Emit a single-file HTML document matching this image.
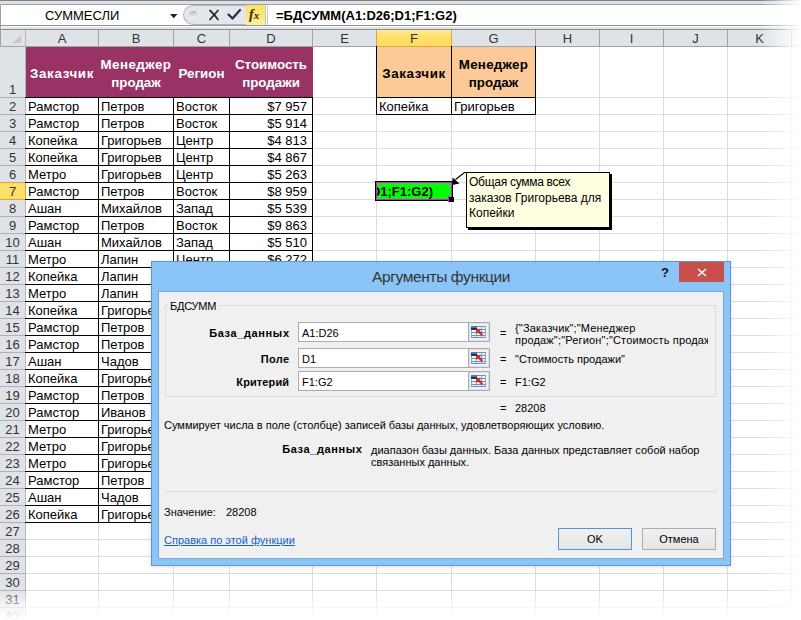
<!DOCTYPE html>
<html><head><meta charset="utf-8"><style>
*{margin:0;padding:0;box-sizing:border-box}
html,body{width:801px;height:620px;overflow:hidden;background:#fff}
body{position:relative;font-family:"Liberation Sans",sans-serif;color:#000}
.a{position:absolute}
.t{position:absolute;white-space:pre;line-height:1}
.gl{position:absolute;background:#dadcdd}
.hd{position:absolute;background:#dfe3e8}
.cell{position:absolute;white-space:pre;font-size:13px;line-height:17px;overflow:hidden}
.dt{font-family:"Liberation Sans",sans-serif;font-size:11px}
</style></head><body>

<div class="a" style="left:0;top:0;width:801px;height:1px;background:#7d8084"></div>
<div class="a" style="left:0;top:1px;width:801px;height:3px;background:#dde1e6"></div>
<div class="a" style="left:0;top:4px;width:801px;height:1px;background:#9aa1a8"></div>
<div class="a" style="left:0;top:5px;width:801px;height:20px;background:#fff"></div>
<div class="a" style="left:0;top:4px;width:1px;height:42px;background:#9aa1a8"></div>
<div class="a" style="left:0;top:25px;width:801px;height:1px;background:#8d9399"></div>
<div class="a" style="left:1px;top:26px;width:800px;height:1px;background:#fff"></div>
<div class="a" style="left:2px;top:27px;width:799px;height:2px;background:#dfe4ea"></div>
<div class="a" style="left:0;top:29px;width:801px;height:1px;background:#8a8c8e"></div>
<div class="t" style="left:45px;top:9px;font-size:13px;">СУММЕСЛИ</div>
<svg class="a" style="left:169px;top:13px" width="10" height="7" viewBox="0 0 10 7"><path d="M1 1 H8.5 L4.75 5.2 Z" fill="#222"/></svg>
<div class="a" style="left:183px;top:5px;width:70px;height:20px;background:#e3e6ea;border:1px solid #b3b8be;border-right:none;border-radius:10px 0 0 10px"></div>
<div class="a" style="left:189px;top:11px;width:8px;height:8px;border-radius:50%;background:linear-gradient(#b4b8bd,#d9dcdf 50%,#f6f7f8)"></div>
<svg class="a" style="left:208px;top:9px" width="12" height="12" viewBox="0 0 12 12"><path d="M2 1.5 Q6 5 10 10.5 M10 1.5 Q6 6 2 10.5" stroke="#262626" stroke-width="1.7" fill="none" stroke-linecap="round"/></svg>
<svg class="a" style="left:227px;top:8px" width="15" height="13" viewBox="0 0 15 13"><path d="M1.5 6.5 L5.5 10.5 L13 2" stroke="#25324a" stroke-width="2.3" fill="none" stroke-linecap="round" stroke-linejoin="round"/></svg>
<div class="a" style="left:246px;top:5px;width:20px;height:20px;background:linear-gradient(#fee36a,#fde672 55%,#fdf0a6);border-right:1px solid #c9c9c9"></div>
<div class="t" style="left:249px;top:8px;font-family:'Liberation Serif',serif;font-style:italic;font-weight:bold;font-size:14px;color:#2a2a2a">f<span style="font-size:11px;margin-left:0px">x</span></div>
<div class="a" style="left:267px;top:5px;width:1px;height:20px;background:#c7cbd0"></div>
<div class="t" style="left:276px;top:9px;font-size:13px;font-weight:bold">=БДСУММ(A1:D26;D1;F1:G2)</div>
<div class="hd" style="left:1px;top:30px;width:800px;height:16px"></div>
<div class="a" style="left:0;top:46px;width:801px;height:1px;background:#9ea3a8"></div>
<svg class="a" style="left:12px;top:34px" width="10" height="10" viewBox="0 0 10 10"><path d="M1 9 L9 9 L9 1 Z" fill="#c4c8cc"/></svg>
<div class="t" style="left:26px;top:32px;width:72px;text-align:center;font-size:13px;color:#333">A</div>
<div class="t" style="left:99px;top:32px;width:74px;text-align:center;font-size:13px;color:#333">B</div>
<div class="t" style="left:174px;top:32px;width:55px;text-align:center;font-size:13px;color:#333">C</div>
<div class="t" style="left:230px;top:32px;width:82px;text-align:center;font-size:13px;color:#333">D</div>
<div class="t" style="left:313px;top:32px;width:63px;text-align:center;font-size:13px;color:#333">E</div>
<div class="a" style="left:376px;top:30px;width:76px;height:17px;background:linear-gradient(#fee89a,#fde06a 45%,#fddd60);border:1px solid #e2a241;border-top:none"></div>
<div class="t" style="left:377px;top:32px;width:74px;text-align:center;font-size:13px;color:#333">F</div>
<div class="t" style="left:452px;top:32px;width:83px;text-align:center;font-size:13px;color:#333">G</div>
<div class="t" style="left:536px;top:32px;width:63px;text-align:center;font-size:13px;color:#333">H</div>
<div class="t" style="left:600px;top:32px;width:63px;text-align:center;font-size:13px;color:#333">I</div>
<div class="t" style="left:664px;top:32px;width:63px;text-align:center;font-size:13px;color:#333">J</div>
<div class="t" style="left:728px;top:32px;width:63px;text-align:center;font-size:13px;color:#333">K</div>
<div class="a" style="left:25px;top:30px;width:1px;height:16px;background:#9ea3a8"></div>
<div class="a" style="left:98px;top:30px;width:1px;height:16px;background:#9ea3a8"></div>
<div class="a" style="left:173px;top:30px;width:1px;height:16px;background:#9ea3a8"></div>
<div class="a" style="left:229px;top:30px;width:1px;height:16px;background:#9ea3a8"></div>
<div class="a" style="left:312px;top:30px;width:1px;height:16px;background:#9ea3a8"></div>
<div class="a" style="left:535px;top:30px;width:1px;height:16px;background:#9ea3a8"></div>
<div class="a" style="left:599px;top:30px;width:1px;height:16px;background:#9ea3a8"></div>
<div class="a" style="left:663px;top:30px;width:1px;height:16px;background:#9ea3a8"></div>
<div class="a" style="left:727px;top:30px;width:1px;height:16px;background:#9ea3a8"></div>
<div class="a" style="left:791px;top:30px;width:1px;height:16px;background:#9ea3a8"></div>
<div class="hd" style="left:0;top:47px;width:25px;height:573px"></div>
<div class="a" style="left:25px;top:30px;width:1px;height:590px;background:#b4b8bd"></div>
<div class="a" style="left:0;top:97px;width:25px;height:1px;background:#aeb2b7"></div>
<div class="t" style="left:0;top:83px;width:25px;text-align:center;font-size:13px;color:#333">1</div>
<div class="a" style="left:0;top:114px;width:25px;height:1px;background:#aeb2b7"></div>
<div class="t" style="left:0;top:100px;width:25px;text-align:center;font-size:13px;color:#333">2</div>
<div class="a" style="left:0;top:131px;width:25px;height:1px;background:#aeb2b7"></div>
<div class="t" style="left:0;top:117px;width:25px;text-align:center;font-size:13px;color:#333">3</div>
<div class="a" style="left:0;top:148px;width:25px;height:1px;background:#aeb2b7"></div>
<div class="t" style="left:0;top:134px;width:25px;text-align:center;font-size:13px;color:#333">4</div>
<div class="a" style="left:0;top:165px;width:25px;height:1px;background:#aeb2b7"></div>
<div class="t" style="left:0;top:151px;width:25px;text-align:center;font-size:13px;color:#333">5</div>
<div class="a" style="left:0;top:182px;width:25px;height:1px;background:#aeb2b7"></div>
<div class="t" style="left:0;top:168px;width:25px;text-align:center;font-size:13px;color:#333">6</div>
<div class="a" style="left:0;top:199px;width:25px;height:1px;background:#aeb2b7"></div>
<div class="a" style="left:0;top:182px;width:26px;height:18px;background:#fde06a;border:1px solid #e2a241;border-left:none"></div>
<div class="t" style="left:0;top:185px;width:25px;text-align:center;font-size:13px;color:#333">7</div>
<div class="a" style="left:0;top:216px;width:25px;height:1px;background:#aeb2b7"></div>
<div class="t" style="left:0;top:202px;width:25px;text-align:center;font-size:13px;color:#333">8</div>
<div class="a" style="left:0;top:233px;width:25px;height:1px;background:#aeb2b7"></div>
<div class="t" style="left:0;top:219px;width:25px;text-align:center;font-size:13px;color:#333">9</div>
<div class="a" style="left:0;top:250px;width:25px;height:1px;background:#aeb2b7"></div>
<div class="t" style="left:0;top:236px;width:25px;text-align:center;font-size:13px;color:#333">10</div>
<div class="a" style="left:0;top:267px;width:25px;height:1px;background:#aeb2b7"></div>
<div class="t" style="left:0;top:253px;width:25px;text-align:center;font-size:13px;color:#333">11</div>
<div class="a" style="left:0;top:284px;width:25px;height:1px;background:#aeb2b7"></div>
<div class="t" style="left:0;top:270px;width:25px;text-align:center;font-size:13px;color:#333">12</div>
<div class="a" style="left:0;top:301px;width:25px;height:1px;background:#aeb2b7"></div>
<div class="t" style="left:0;top:287px;width:25px;text-align:center;font-size:13px;color:#333">13</div>
<div class="a" style="left:0;top:318px;width:25px;height:1px;background:#aeb2b7"></div>
<div class="t" style="left:0;top:304px;width:25px;text-align:center;font-size:13px;color:#333">14</div>
<div class="a" style="left:0;top:335px;width:25px;height:1px;background:#aeb2b7"></div>
<div class="t" style="left:0;top:321px;width:25px;text-align:center;font-size:13px;color:#333">15</div>
<div class="a" style="left:0;top:352px;width:25px;height:1px;background:#aeb2b7"></div>
<div class="t" style="left:0;top:338px;width:25px;text-align:center;font-size:13px;color:#333">16</div>
<div class="a" style="left:0;top:369px;width:25px;height:1px;background:#aeb2b7"></div>
<div class="t" style="left:0;top:355px;width:25px;text-align:center;font-size:13px;color:#333">17</div>
<div class="a" style="left:0;top:386px;width:25px;height:1px;background:#aeb2b7"></div>
<div class="t" style="left:0;top:372px;width:25px;text-align:center;font-size:13px;color:#333">18</div>
<div class="a" style="left:0;top:403px;width:25px;height:1px;background:#aeb2b7"></div>
<div class="t" style="left:0;top:389px;width:25px;text-align:center;font-size:13px;color:#333">19</div>
<div class="a" style="left:0;top:420px;width:25px;height:1px;background:#aeb2b7"></div>
<div class="t" style="left:0;top:406px;width:25px;text-align:center;font-size:13px;color:#333">20</div>
<div class="a" style="left:0;top:437px;width:25px;height:1px;background:#aeb2b7"></div>
<div class="t" style="left:0;top:423px;width:25px;text-align:center;font-size:13px;color:#333">21</div>
<div class="a" style="left:0;top:454px;width:25px;height:1px;background:#aeb2b7"></div>
<div class="t" style="left:0;top:440px;width:25px;text-align:center;font-size:13px;color:#333">22</div>
<div class="a" style="left:0;top:471px;width:25px;height:1px;background:#aeb2b7"></div>
<div class="t" style="left:0;top:457px;width:25px;text-align:center;font-size:13px;color:#333">23</div>
<div class="a" style="left:0;top:488px;width:25px;height:1px;background:#aeb2b7"></div>
<div class="t" style="left:0;top:474px;width:25px;text-align:center;font-size:13px;color:#333">24</div>
<div class="a" style="left:0;top:505px;width:25px;height:1px;background:#aeb2b7"></div>
<div class="t" style="left:0;top:491px;width:25px;text-align:center;font-size:13px;color:#333">25</div>
<div class="a" style="left:0;top:522px;width:25px;height:1px;background:#aeb2b7"></div>
<div class="t" style="left:0;top:508px;width:25px;text-align:center;font-size:13px;color:#333">26</div>
<div class="a" style="left:0;top:539px;width:25px;height:1px;background:#aeb2b7"></div>
<div class="t" style="left:0;top:525px;width:25px;text-align:center;font-size:13px;color:#333">27</div>
<div class="a" style="left:0;top:556px;width:25px;height:1px;background:#aeb2b7"></div>
<div class="t" style="left:0;top:542px;width:25px;text-align:center;font-size:13px;color:#333">28</div>
<div class="a" style="left:0;top:573px;width:25px;height:1px;background:#aeb2b7"></div>
<div class="t" style="left:0;top:559px;width:25px;text-align:center;font-size:13px;color:#333">29</div>
<div class="a" style="left:0;top:590px;width:25px;height:1px;background:#aeb2b7"></div>
<div class="t" style="left:0;top:576px;width:25px;text-align:center;font-size:13px;color:#333">30</div>
<div class="a" style="left:0;top:607px;width:25px;height:1px;background:#aeb2b7"></div>
<div class="t" style="left:0;top:593px;width:25px;text-align:center;font-size:13px;color:#333">31</div>
<div class="a" style="left:0;top:624px;width:25px;height:1px;background:#aeb2b7"></div>
<div class="t" style="left:0;top:610px;width:25px;text-align:center;font-size:13px;color:#333">32</div>
<div class="a" style="left:0;top:641px;width:25px;height:1px;background:#aeb2b7"></div>
<div class="t" style="left:0;top:627px;width:25px;text-align:center;font-size:13px;color:#333">33</div>
<div class="gl" style="left:26px;top:97px;width:775px;height:1px"></div>
<div class="gl" style="left:26px;top:114px;width:775px;height:1px"></div>
<div class="gl" style="left:26px;top:131px;width:775px;height:1px"></div>
<div class="gl" style="left:26px;top:148px;width:775px;height:1px"></div>
<div class="gl" style="left:26px;top:165px;width:775px;height:1px"></div>
<div class="gl" style="left:26px;top:182px;width:775px;height:1px"></div>
<div class="gl" style="left:26px;top:199px;width:775px;height:1px"></div>
<div class="gl" style="left:26px;top:216px;width:775px;height:1px"></div>
<div class="gl" style="left:26px;top:233px;width:775px;height:1px"></div>
<div class="gl" style="left:26px;top:250px;width:775px;height:1px"></div>
<div class="gl" style="left:26px;top:267px;width:775px;height:1px"></div>
<div class="gl" style="left:26px;top:284px;width:775px;height:1px"></div>
<div class="gl" style="left:26px;top:301px;width:775px;height:1px"></div>
<div class="gl" style="left:26px;top:318px;width:775px;height:1px"></div>
<div class="gl" style="left:26px;top:335px;width:775px;height:1px"></div>
<div class="gl" style="left:26px;top:352px;width:775px;height:1px"></div>
<div class="gl" style="left:26px;top:369px;width:775px;height:1px"></div>
<div class="gl" style="left:26px;top:386px;width:775px;height:1px"></div>
<div class="gl" style="left:26px;top:403px;width:775px;height:1px"></div>
<div class="gl" style="left:26px;top:420px;width:775px;height:1px"></div>
<div class="gl" style="left:26px;top:437px;width:775px;height:1px"></div>
<div class="gl" style="left:26px;top:454px;width:775px;height:1px"></div>
<div class="gl" style="left:26px;top:471px;width:775px;height:1px"></div>
<div class="gl" style="left:26px;top:488px;width:775px;height:1px"></div>
<div class="gl" style="left:26px;top:505px;width:775px;height:1px"></div>
<div class="gl" style="left:26px;top:522px;width:775px;height:1px"></div>
<div class="gl" style="left:26px;top:539px;width:775px;height:1px"></div>
<div class="gl" style="left:26px;top:556px;width:775px;height:1px"></div>
<div class="gl" style="left:26px;top:573px;width:775px;height:1px"></div>
<div class="gl" style="left:26px;top:590px;width:775px;height:1px"></div>
<div class="gl" style="left:26px;top:607px;width:775px;height:1px"></div>
<div class="gl" style="left:26px;top:624px;width:775px;height:1px"></div>
<div class="gl" style="left:26px;top:641px;width:775px;height:1px"></div>
<div class="gl" style="left:98px;top:47px;width:1px;height:573px"></div>
<div class="gl" style="left:173px;top:47px;width:1px;height:573px"></div>
<div class="gl" style="left:229px;top:47px;width:1px;height:573px"></div>
<div class="gl" style="left:312px;top:47px;width:1px;height:573px"></div>
<div class="gl" style="left:376px;top:47px;width:1px;height:573px"></div>
<div class="gl" style="left:451px;top:47px;width:1px;height:573px"></div>
<div class="gl" style="left:535px;top:47px;width:1px;height:573px"></div>
<div class="gl" style="left:599px;top:47px;width:1px;height:573px"></div>
<div class="gl" style="left:663px;top:47px;width:1px;height:573px"></div>
<div class="gl" style="left:727px;top:47px;width:1px;height:573px"></div>
<div class="gl" style="left:791px;top:47px;width:1px;height:573px"></div>
<div class="a" style="left:26px;top:47px;width:287px;height:50px;background:#993366"></div>
<div class="t" style="left:26px;top:64.5px;width:72px;text-align:center;font-size:13.33px;font-weight:bold;color:#fff;line-height:17.6px"><span style="letter-spacing:0.65px">Заказчик</span></div>
<div class="t" style="left:99px;top:56.0px;width:74px;text-align:center;font-size:13.33px;font-weight:bold;color:#fff;line-height:17.6px"><span style="letter-spacing:0.45px">Менеджер</span><br>продаж</div>
<div class="t" style="left:174px;top:64.5px;width:55px;text-align:center;font-size:13.33px;font-weight:bold;color:#fff;line-height:17.6px">Регион</div>
<div class="t" style="left:230px;top:56.0px;width:82px;text-align:center;font-size:13.33px;font-weight:bold;color:#fff;line-height:17.6px">Стоимость<br>продажи</div>
<div class="a" style="left:26px;top:97px;width:287px;height:426px;background:#fff"></div>
<div class="a" style="left:25px;top:97px;width:288px;height:1px;background:#000"></div>
<div class="a" style="left:25px;top:114px;width:288px;height:1px;background:#000"></div>
<div class="a" style="left:25px;top:131px;width:288px;height:1px;background:#000"></div>
<div class="a" style="left:25px;top:148px;width:288px;height:1px;background:#000"></div>
<div class="a" style="left:25px;top:165px;width:288px;height:1px;background:#000"></div>
<div class="a" style="left:25px;top:182px;width:288px;height:1px;background:#000"></div>
<div class="a" style="left:25px;top:199px;width:288px;height:1px;background:#000"></div>
<div class="a" style="left:25px;top:216px;width:288px;height:1px;background:#000"></div>
<div class="a" style="left:25px;top:233px;width:288px;height:1px;background:#000"></div>
<div class="a" style="left:25px;top:250px;width:288px;height:1px;background:#000"></div>
<div class="a" style="left:25px;top:267px;width:288px;height:1px;background:#000"></div>
<div class="a" style="left:25px;top:284px;width:288px;height:1px;background:#000"></div>
<div class="a" style="left:25px;top:301px;width:288px;height:1px;background:#000"></div>
<div class="a" style="left:25px;top:318px;width:288px;height:1px;background:#000"></div>
<div class="a" style="left:25px;top:335px;width:288px;height:1px;background:#000"></div>
<div class="a" style="left:25px;top:352px;width:288px;height:1px;background:#000"></div>
<div class="a" style="left:25px;top:369px;width:288px;height:1px;background:#000"></div>
<div class="a" style="left:25px;top:386px;width:288px;height:1px;background:#000"></div>
<div class="a" style="left:25px;top:403px;width:288px;height:1px;background:#000"></div>
<div class="a" style="left:25px;top:420px;width:288px;height:1px;background:#000"></div>
<div class="a" style="left:25px;top:437px;width:288px;height:1px;background:#000"></div>
<div class="a" style="left:25px;top:454px;width:288px;height:1px;background:#000"></div>
<div class="a" style="left:25px;top:471px;width:288px;height:1px;background:#000"></div>
<div class="a" style="left:25px;top:488px;width:288px;height:1px;background:#000"></div>
<div class="a" style="left:25px;top:505px;width:288px;height:1px;background:#000"></div>
<div class="a" style="left:25px;top:522px;width:288px;height:1px;background:#000"></div>
<div class="a" style="left:98px;top:97px;width:1px;height:426px;background:#000"></div>
<div class="a" style="left:173px;top:97px;width:1px;height:426px;background:#000"></div>
<div class="a" style="left:229px;top:97px;width:1px;height:426px;background:#000"></div>
<div class="a" style="left:312px;top:97px;width:1px;height:426px;background:#000"></div>
<div class="t" style="left:28px;top:100px;font-size:13px">Рамстор</div>
<div class="t" style="left:101px;top:100px;font-size:13px">Петров</div>
<div class="t" style="left:176px;top:100px;font-size:13px">Восток</div>
<div class="t" style="left:230px;top:100px;width:77px;text-align:right;font-size:13px">$7 957</div>
<div class="t" style="left:28px;top:117px;font-size:13px">Рамстор</div>
<div class="t" style="left:101px;top:117px;font-size:13px">Петров</div>
<div class="t" style="left:176px;top:117px;font-size:13px">Восток</div>
<div class="t" style="left:230px;top:117px;width:77px;text-align:right;font-size:13px">$5 914</div>
<div class="t" style="left:28px;top:134px;font-size:13px">Копейка</div>
<div class="t" style="left:101px;top:134px;font-size:13px">Григорьев</div>
<div class="t" style="left:176px;top:134px;font-size:13px">Центр</div>
<div class="t" style="left:230px;top:134px;width:77px;text-align:right;font-size:13px">$4 813</div>
<div class="t" style="left:28px;top:151px;font-size:13px">Копейка</div>
<div class="t" style="left:101px;top:151px;font-size:13px">Григорьев</div>
<div class="t" style="left:176px;top:151px;font-size:13px">Центр</div>
<div class="t" style="left:230px;top:151px;width:77px;text-align:right;font-size:13px">$4 867</div>
<div class="t" style="left:28px;top:168px;font-size:13px">Метро</div>
<div class="t" style="left:101px;top:168px;font-size:13px">Григорьев</div>
<div class="t" style="left:176px;top:168px;font-size:13px">Центр</div>
<div class="t" style="left:230px;top:168px;width:77px;text-align:right;font-size:13px">$5 263</div>
<div class="t" style="left:28px;top:185px;font-size:13px">Рамстор</div>
<div class="t" style="left:101px;top:185px;font-size:13px">Петров</div>
<div class="t" style="left:176px;top:185px;font-size:13px">Восток</div>
<div class="t" style="left:230px;top:185px;width:77px;text-align:right;font-size:13px">$8 959</div>
<div class="t" style="left:28px;top:202px;font-size:13px">Ашан</div>
<div class="t" style="left:101px;top:202px;font-size:13px">Михайлов</div>
<div class="t" style="left:176px;top:202px;font-size:13px">Запад</div>
<div class="t" style="left:230px;top:202px;width:77px;text-align:right;font-size:13px">$5 539</div>
<div class="t" style="left:28px;top:219px;font-size:13px">Рамстор</div>
<div class="t" style="left:101px;top:219px;font-size:13px">Петров</div>
<div class="t" style="left:176px;top:219px;font-size:13px">Восток</div>
<div class="t" style="left:230px;top:219px;width:77px;text-align:right;font-size:13px">$9 863</div>
<div class="t" style="left:28px;top:236px;font-size:13px">Ашан</div>
<div class="t" style="left:101px;top:236px;font-size:13px">Михайлов</div>
<div class="t" style="left:176px;top:236px;font-size:13px">Запад</div>
<div class="t" style="left:230px;top:236px;width:77px;text-align:right;font-size:13px">$5 510</div>
<div class="t" style="left:28px;top:253px;font-size:13px">Метро</div>
<div class="t" style="left:101px;top:253px;font-size:13px">Лапин</div>
<div class="t" style="left:176px;top:253px;font-size:13px">Центр</div>
<div class="t" style="left:230px;top:253px;width:77px;text-align:right;font-size:13px">$6 272</div>
<div class="t" style="left:28px;top:270px;font-size:13px">Копейка</div>
<div class="t" style="left:101px;top:270px;font-size:13px">Лапин</div>
<div class="t" style="left:176px;top:270px;font-size:13px">Центр</div>
<div class="t" style="left:230px;top:270px;width:77px;text-align:right;font-size:13px">$5 000</div>
<div class="t" style="left:28px;top:287px;font-size:13px">Метро</div>
<div class="t" style="left:101px;top:287px;font-size:13px">Лапин</div>
<div class="t" style="left:176px;top:287px;font-size:13px">Центр</div>
<div class="t" style="left:230px;top:287px;width:77px;text-align:right;font-size:13px">$5 000</div>
<div class="t" style="left:28px;top:304px;font-size:13px">Копейка</div>
<div class="t" style="left:101px;top:304px;font-size:13px">Григорьев</div>
<div class="t" style="left:176px;top:304px;font-size:13px">Центр</div>
<div class="t" style="left:230px;top:304px;width:77px;text-align:right;font-size:13px">$5 000</div>
<div class="t" style="left:28px;top:321px;font-size:13px">Рамстор</div>
<div class="t" style="left:101px;top:321px;font-size:13px">Петров</div>
<div class="t" style="left:176px;top:321px;font-size:13px">Восток</div>
<div class="t" style="left:230px;top:321px;width:77px;text-align:right;font-size:13px">$5 000</div>
<div class="t" style="left:28px;top:338px;font-size:13px">Рамстор</div>
<div class="t" style="left:101px;top:338px;font-size:13px">Петров</div>
<div class="t" style="left:176px;top:338px;font-size:13px">Восток</div>
<div class="t" style="left:230px;top:338px;width:77px;text-align:right;font-size:13px">$5 000</div>
<div class="t" style="left:28px;top:355px;font-size:13px">Ашан</div>
<div class="t" style="left:101px;top:355px;font-size:13px">Чадов</div>
<div class="t" style="left:176px;top:355px;font-size:13px">Запад</div>
<div class="t" style="left:230px;top:355px;width:77px;text-align:right;font-size:13px">$5 000</div>
<div class="t" style="left:28px;top:372px;font-size:13px">Копейка</div>
<div class="t" style="left:101px;top:372px;font-size:13px">Григорьев</div>
<div class="t" style="left:176px;top:372px;font-size:13px">Центр</div>
<div class="t" style="left:230px;top:372px;width:77px;text-align:right;font-size:13px">$5 000</div>
<div class="t" style="left:28px;top:389px;font-size:13px">Рамстор</div>
<div class="t" style="left:101px;top:389px;font-size:13px">Петров</div>
<div class="t" style="left:176px;top:389px;font-size:13px">Восток</div>
<div class="t" style="left:230px;top:389px;width:77px;text-align:right;font-size:13px">$5 000</div>
<div class="t" style="left:28px;top:406px;font-size:13px">Рамстор</div>
<div class="t" style="left:101px;top:406px;font-size:13px">Иванов</div>
<div class="t" style="left:176px;top:406px;font-size:13px">Восток</div>
<div class="t" style="left:230px;top:406px;width:77px;text-align:right;font-size:13px">$5 000</div>
<div class="t" style="left:28px;top:423px;font-size:13px">Метро</div>
<div class="t" style="left:101px;top:423px;font-size:13px">Григорьев</div>
<div class="t" style="left:176px;top:423px;font-size:13px">Центр</div>
<div class="t" style="left:230px;top:423px;width:77px;text-align:right;font-size:13px">$5 000</div>
<div class="t" style="left:28px;top:440px;font-size:13px">Метро</div>
<div class="t" style="left:101px;top:440px;font-size:13px">Григорьев</div>
<div class="t" style="left:176px;top:440px;font-size:13px">Центр</div>
<div class="t" style="left:230px;top:440px;width:77px;text-align:right;font-size:13px">$5 000</div>
<div class="t" style="left:28px;top:457px;font-size:13px">Метро</div>
<div class="t" style="left:101px;top:457px;font-size:13px">Григорьев</div>
<div class="t" style="left:176px;top:457px;font-size:13px">Центр</div>
<div class="t" style="left:230px;top:457px;width:77px;text-align:right;font-size:13px">$5 000</div>
<div class="t" style="left:28px;top:474px;font-size:13px">Рамстор</div>
<div class="t" style="left:101px;top:474px;font-size:13px">Петров</div>
<div class="t" style="left:176px;top:474px;font-size:13px">Восток</div>
<div class="t" style="left:230px;top:474px;width:77px;text-align:right;font-size:13px">$5 000</div>
<div class="t" style="left:28px;top:491px;font-size:13px">Ашан</div>
<div class="t" style="left:101px;top:491px;font-size:13px">Чадов</div>
<div class="t" style="left:176px;top:491px;font-size:13px">Запад</div>
<div class="t" style="left:230px;top:491px;width:77px;text-align:right;font-size:13px">$5 000</div>
<div class="t" style="left:28px;top:508px;font-size:13px">Копейка</div>
<div class="t" style="left:101px;top:508px;font-size:13px">Григорьев</div>
<div class="t" style="left:176px;top:508px;font-size:13px">Центр</div>
<div class="t" style="left:230px;top:508px;width:77px;text-align:right;font-size:13px">$5 000</div>
<div class="a" style="left:377px;top:47px;width:158px;height:50px;background:#fcc998"></div>
<div class="t" style="left:377px;top:65px;width:74px;text-align:center;font-size:13.33px;font-weight:bold;line-height:18px;letter-spacing:0.6px">Заказчик</div>
<div class="t" style="left:452px;top:56px;width:83px;text-align:center;font-size:13.33px;font-weight:bold;line-height:17.6px"><span style="letter-spacing:0.25px">Менеджер</span><br>продаж</div>
<div class="a" style="left:377px;top:98px;width:158px;height:16px;background:#fff"></div>
<div class="a" style="left:376px;top:46px;width:1px;height:69px;background:#000"></div>
<div class="a" style="left:451px;top:46px;width:1px;height:69px;background:#000"></div>
<div class="a" style="left:535px;top:46px;width:1px;height:69px;background:#000"></div>
<div class="a" style="left:376px;top:97px;width:160px;height:1px;background:#000"></div>
<div class="a" style="left:376px;top:114px;width:160px;height:1px;background:#000"></div>
<div class="t" style="left:379px;top:100px;font-size:13px">Копейка</div>
<div class="t" style="left:454px;top:100px;font-size:13px">Григорьев</div>
<div class="a" style="left:375px;top:181px;width:78px;height:20px;background:#000"></div>
<div class="a" style="left:376px;top:182px;width:76px;height:18px;background:#ff00ff"></div>
<div class="a" style="left:377px;top:183px;width:74px;height:16px;background:#00ff00;overflow:hidden"><div class="t" style="right:18px;top:2px;font-size:13px;font-weight:bold">D1;F1:G2)</div></div>
<div class="a" style="left:449px;top:197px;width:5px;height:5px;background:#000"></div>
<div class="a" style="left:448px;top:196px;width:1px;height:6px;background:#ff00ff"></div>
<svg class="a" style="left:440px;top:165px" width="30" height="25" viewBox="0 0 30 25"><path d="M26.5 7.5 L24.5 7.5 L15.5 14.5" stroke="#000" stroke-width="1.1" fill="none"/><path d="M12.5 12.5 L12.5 20 L19.5 18.5 Z" fill="#000"/></svg>
<div class="a" style="left:468px;top:174px;width:144px;height:56px;background:#000"></div>
<div class="a" style="left:466px;top:172px;width:144px;height:56px;background:#ffffe1;border:1px solid #000"></div>
<div class="t" style="left:469px;top:175px;font-size:12px;line-height:15.5px"><span style="letter-spacing:-0.28px">Общая сумма всех</span><br>заказов Григорьева для<br>Копейки</div>
<div class="a" style="left:151px;top:261px;width:580px;height:305px;background:#8bc5f8;border:1px solid #6096cc;box-shadow:0 1px 5px rgba(0,0,0,0.12)"></div>
<div class="t" style="left:372px;top:269px;font-size:15.5px;letter-spacing:-0.37px;color:#333">Аргументы функции</div>
<div class="t" style="left:661px;top:266px;font-size:13px;font-weight:bold;color:#111">?</div>
<div class="a" style="left:679px;top:262px;width:45px;height:20px;background:#c7504f"></div>
<svg class="a" style="left:697px;top:268px" width="10" height="9" viewBox="0 0 10 9"><path d="M1 1 L9 8 M9 1 L1 8" stroke="#fff" stroke-width="1.5"/></svg>
<div class="a" style="left:158px;top:291px;width:566px;height:268px;background:#f0f0f0;border:1px solid #72a6d8"></div>
<div class="a" style="left:165px;top:305px;width:551px;height:92px;border:1px solid #dcdcdc"></div>
<div class="t dt" style="left:168px;top:301px;padding:0 2px;background:#f0f0f0;letter-spacing:-0.25px">БДСУММ</div>
<div class="t dt" style="right:511.38px;top:328px;text-align:right;font-weight:bold;letter-spacing:0.62px">База_данных</div>
<div class="a" style="left:298px;top:322px;width:170px;height:20px;background:#fff;border:1px solid #abadb3;border-right:none"></div>
<div class="t dt" style="left:302px;top:328px">A1:D26</div>
<svg class="a" style="left:468px;top:322px" width="22" height="20" viewBox="0 0 22 20">
<rect x="0.5" y="0.5" width="21" height="19" fill="#f3f3f3" stroke="#a9acb0" stroke-width="1"/>
<rect x="1.5" y="1.5" width="19" height="17" fill="none" stroke="#dedede" stroke-width="1"/>
<path d="M3 4.5 H18 M3 7.5 H18 M3 10.5 H18 M3 13.5 H18 M3 15.5 H18" stroke="#5d80bc" stroke-width="0.9"/>
<path d="M3.5 4 V16 M8.5 4 V16 M13.5 4 V16 M17.5 4 V16" stroke="#7b98c8" stroke-width="0.8"/>
<rect x="3" y="4" width="6" height="1.6" fill="#3b7ad8"/>
<rect x="3" y="5.6" width="6" height="2.2" fill="#1d2a44"/>
<path d="M8.2 7 L12.8 7.4 L11.4 8.8 L14.8 12.2 L13.4 13.6 L10 10.2 L8.6 11.6 Z" fill="#d42a1e" stroke="#a8170f" stroke-width="0.4" stroke-linejoin="round"/>
</svg>
<div class="t dt" style="left:500px;top:328px">=</div>
<div class="t dt" style="right:511.72px;top:354px;text-align:right;font-weight:bold;letter-spacing:0.28px">Поле</div>
<div class="a" style="left:298px;top:348px;width:170px;height:20px;background:#fff;border:1px solid #abadb3;border-right:none"></div>
<div class="t dt" style="left:302px;top:354px">D1</div>
<svg class="a" style="left:468px;top:348px" width="22" height="20" viewBox="0 0 22 20">
<rect x="0.5" y="0.5" width="21" height="19" fill="#f3f3f3" stroke="#a9acb0" stroke-width="1"/>
<rect x="1.5" y="1.5" width="19" height="17" fill="none" stroke="#dedede" stroke-width="1"/>
<path d="M3 4.5 H18 M3 7.5 H18 M3 10.5 H18 M3 13.5 H18 M3 15.5 H18" stroke="#5d80bc" stroke-width="0.9"/>
<path d="M3.5 4 V16 M8.5 4 V16 M13.5 4 V16 M17.5 4 V16" stroke="#7b98c8" stroke-width="0.8"/>
<rect x="3" y="4" width="6" height="1.6" fill="#3b7ad8"/>
<rect x="3" y="5.6" width="6" height="2.2" fill="#1d2a44"/>
<path d="M8.2 7 L12.8 7.4 L11.4 8.8 L14.8 12.2 L13.4 13.6 L10 10.2 L8.6 11.6 Z" fill="#d42a1e" stroke="#a8170f" stroke-width="0.4" stroke-linejoin="round"/>
</svg>
<div class="t dt" style="left:500px;top:354px">=</div>
<div class="t dt" style="right:511.90px;top:377px;text-align:right;font-weight:bold;letter-spacing:0.1px">Критерий</div>
<div class="a" style="left:298px;top:371px;width:170px;height:20px;background:#fff;border:1px solid #abadb3;border-right:none"></div>
<div class="t dt" style="left:302px;top:377px">F1:G2</div>
<svg class="a" style="left:468px;top:371px" width="22" height="20" viewBox="0 0 22 20">
<rect x="0.5" y="0.5" width="21" height="19" fill="#f3f3f3" stroke="#a9acb0" stroke-width="1"/>
<rect x="1.5" y="1.5" width="19" height="17" fill="none" stroke="#dedede" stroke-width="1"/>
<path d="M3 4.5 H18 M3 7.5 H18 M3 10.5 H18 M3 13.5 H18 M3 15.5 H18" stroke="#5d80bc" stroke-width="0.9"/>
<path d="M3.5 4 V16 M8.5 4 V16 M13.5 4 V16 M17.5 4 V16" stroke="#7b98c8" stroke-width="0.8"/>
<rect x="3" y="4" width="6" height="1.6" fill="#3b7ad8"/>
<rect x="3" y="5.6" width="6" height="2.2" fill="#1d2a44"/>
<path d="M8.2 7 L12.8 7.4 L11.4 8.8 L14.8 12.2 L13.4 13.6 L10 10.2 L8.6 11.6 Z" fill="#d42a1e" stroke="#a8170f" stroke-width="0.4" stroke-linejoin="round"/>
</svg>
<div class="t dt" style="left:500px;top:377px">=</div>
<div class="t dt" style="left:515px;top:321.5px;line-height:12px;width:193px;overflow:hidden;letter-spacing:0.17px">{"Заказчик";"Менеджер<br>продаж";"Регион";"Стоимость продаж</div>
<div class="t dt" style="left:515px;top:354px">"Стоимость продажи"</div>
<div class="t dt" style="left:515px;top:377px">F1:G2</div>
<div class="t dt" style="left:500px;top:403px">=</div>
<div class="t dt" style="left:515px;top:403px">28208</div>
<div class="t dt" style="left:164px;top:420px">Суммирует числа в поле (столбце) записей базы данных, удовлетворяющих условию.</div>
<div class="t dt" style="right:438.4px;top:444px;text-align:right;font-weight:bold;letter-spacing:0.62px">База_данных</div>
<div class="t dt" style="left:371px;top:444px;line-height:12px">диапазон базы данных. База данных представляет собой набор<br>связанных данных.</div>
<div class="a" style="left:165px;top:491px;width:552px;height:1px;background:#dcdcdc"></div>
<div class="t dt" style="left:164px;top:507px">Значение:</div>
<div class="t dt" style="left:226px;top:507px">28208</div>
<div class="t dt" style="left:164px;top:535px;color:#1361c4;text-decoration:underline">Справка по этой функции</div>
<div class="a" style="left:558px;top:528px;width:74px;height:22px;background:linear-gradient(#f0f0f0,#e5e5e5);border:1px solid #4f95dc"></div>
<div class="t dt" style="left:558px;top:534px;width:74px;text-align:center">OK</div>
<div class="a" style="left:642px;top:528px;width:74px;height:22px;background:linear-gradient(#f0f0f0,#e5e5e5);border:1px solid #acacac"></div>
<div class="t dt" style="left:642px;top:534px;width:74px;text-align:center">Отмена</div>
<div class="a" style="left:760px;top:0;width:41px;height:620px;background:linear-gradient(90deg,rgba(255,255,255,0),rgba(255,255,255,0.8) 80%,#fff)"></div>
<div class="a" style="left:0;top:590px;width:801px;height:30px;background:linear-gradient(rgba(255,255,255,0),rgba(255,255,255,0.75) 60%,#fff)"></div>
</body></html>
